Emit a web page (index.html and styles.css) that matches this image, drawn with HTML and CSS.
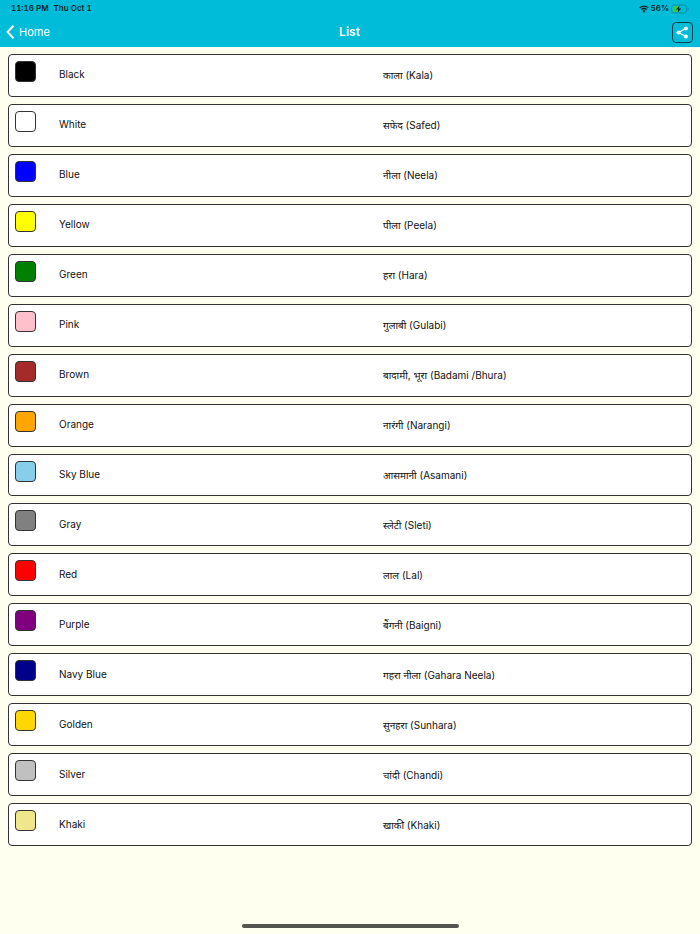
FILE: index.html
```html
<!DOCTYPE html>
<html lang="en">

<head>
  <meta charset="UTF-8">
  <meta name="viewport" content="width=device-width, initial-scale=1">
  <title>List</title>
  <link rel="stylesheet" href="styles.css">
</head>

<body>
  <div class="screen">
    <header class="header">
      <div class="status">
        <div class="status-time">
          <span>11:16 PM</span>
          <span>Thu Oct 1</span>
        </div>
        <div class="status-icons">
          <svg width="10" height="8" viewBox="0 0 20 15" aria-hidden="true">
            <path d="M1.5 5.2a12.2 12.2 0 0 1 17 0M4.6 8.7a7.6 7.6 0 0 1 10.8 0" fill="none" stroke="#06262c" stroke-width="2.8"/>
            <path d="M10 14.8l-3.4-3.6a4.8 4.8 0 0 1 6.8 0z" fill="#06262c"/>
          </svg>
          <span>56%</span>
          <svg width="18" height="10" viewBox="0 0 18 10" aria-hidden="true">
            <rect x="0.5" y="1" width="15" height="8" rx="2.5" fill="none" stroke="#078fa2"/>
            <path d="M3 2h5v6H3a1.5 1.5 0 0 1-1.5-1.5v-3A1.5 1.5 0 0 1 3 2z" fill="#35c759"/>
            <path d="M16.6 3.5v3q1-.4 1-1.5t-1-1.5z" fill="#078fa2"/>
            <path d="M8.6 1.8L5 5.6h2.3L6.6 8.4 10.3 4.6H8z" fill="#06262c"/>
          </svg>
        </div>
      </div>
      <nav class="navbar">
        <a class="back" href="#">
          <svg width="9" height="14" viewBox="0 0 9 14" aria-hidden="true">
            <path d="M7.5 0.8L1.5 7l6 6.2" fill="none" stroke="#fff" stroke-width="2"/>
          </svg>
          Home
        </a>
        <h1 class="title">List</h1>
        <button class="share" type="button" aria-label="Share">
          <svg width="13" height="13" viewBox="0 0 13 13" aria-hidden="true">
            <path d="M9.8 2.5L2.5 6.5l7.3 4" fill="none" stroke="#fff" stroke-width="1.2"/>
            <circle cx="9.8" cy="2.5" r="2.1" fill="#fff"/>
            <circle cx="2.5" cy="6.5" r="2.1" fill="#fff"/>
            <circle cx="9.8" cy="10.5" r="2.1" fill="#fff"/>
          </svg>
        </button>
      </nav>
    </header>

    <ul class="list">
      <li class="row">
        <span class="swatch black"></span>
        <span>Black</span>
        <span class="hindi">काला (Kala)</span>
      </li>
      <li class="row">
        <span class="swatch white"></span>
        <span>White</span>
        <span class="hindi">सफेद (Safed)</span>
      </li>
      <li class="row">
        <span class="swatch blue"></span>
        <span>Blue</span>
        <span class="hindi">नीला (Neela)</span>
      </li>
      <li class="row">
        <span class="swatch yellow"></span>
        <span>Yellow</span>
        <span class="hindi">पीला (Peela)</span>
      </li>
      <li class="row">
        <span class="swatch green"></span>
        <span>Green</span>
        <span class="hindi">हरा (Hara)</span>
      </li>
      <li class="row">
        <span class="swatch pink"></span>
        <span>Pink</span>
        <span class="hindi">गुलाबी (Gulabi)</span>
      </li>
      <li class="row">
        <span class="swatch brown"></span>
        <span>Brown</span>
        <span class="hindi">बादामी, भूरा (Badami /Bhura)</span>
      </li>
      <li class="row">
        <span class="swatch orange"></span>
        <span>Orange</span>
        <span class="hindi">नारंगी (Narangi)</span>
      </li>
      <li class="row">
        <span class="swatch sky-blue"></span>
        <span>Sky Blue</span>
        <span class="hindi">आसमानी (Asamani)</span>
      </li>
      <li class="row">
        <span class="swatch gray"></span>
        <span>Gray</span>
        <span class="hindi">स्लेटी (Sleti)</span>
      </li>
      <li class="row">
        <span class="swatch red"></span>
        <span>Red</span>
        <span class="hindi">लाल (Lal)</span>
      </li>
      <li class="row">
        <span class="swatch purple"></span>
        <span>Purple</span>
        <span class="hindi">बैंगनी (Baigni)</span>
      </li>
      <li class="row">
        <span class="swatch navy-blue"></span>
        <span>Navy Blue</span>
        <span class="hindi">गहरा नीला (Gahara Neela)</span>
      </li>
      <li class="row">
        <span class="swatch golden"></span>
        <span>Golden</span>
        <span class="hindi">सुनहरा (Sunhara)</span>
      </li>
      <li class="row">
        <span class="swatch silver"></span>
        <span>Silver</span>
        <span class="hindi">चांदी (Chandi)</span>
      </li>
      <li class="row">
        <span class="swatch khaki"></span>
        <span>Khaki</span>
        <span class="hindi">खाकी (Khaki)</span>
      </li>
    </ul>

    <footer class="footer">
      <div class="home-bar"></div>
    </footer>
  </div>
</body>

</html>
```
FILE: styles.css
```css
* {
  box-sizing: border-box;
}

body {
  margin: 0;
  font-family: Inter, "Noto Sans", "Noto Sans Devanagari", sans-serif;
  font-size: 10px;
  line-height: 16px;
  color: #111;
}

.screen {
  display: flex;
  flex-direction: column;
  min-height: 100vh;
  background-color: #fffff0;
}

.header {
  background-color: #00bcd8;
}

/* status bar */
.status {
  display: flex;
  justify-content: space-between;
  padding: 0 11px;
  height: 17px;
  font-size: 8px;
  font-weight: 600;
  font-variant-numeric: tabular-nums;
  line-height: 17px;
  color: #06262c;
}

.status-time {
  display: flex;
  gap: 5px;
}

.status-icons {
  display: flex;
  align-items: center;
  gap: 2px;
}

/* nav bar */
.navbar {
  display: grid;
  grid-template-columns: 1fr auto 1fr;
  align-items: center;
  height: 30px;
  padding: 0 7px 0 6px;
}

.back {
  display: flex;
  align-items: center;
  justify-self: start;
  gap: 4px;
  font-size: 11px;
  color: #fff;
  text-decoration: none;
}

.title {
  margin: 0;
  font-size: 12px;
  font-weight: 600;
  color: #fff;
}

.share {
  display: flex;
  align-items: center;
  justify-content: center;
  justify-self: end;
  width: 21px;
  height: 21px;
  padding: 0;
  border: 1px solid #04414b;
  border-radius: 4px;
  background: none;
}

/* colour list, rows share the free height */
.list {
  display: flex;
  flex: 1;
  flex-direction: column;
  gap: 7px;
  margin: 0;
  padding: 7px 8px 0;
  list-style: none;
}

.row {
  display: grid;
  flex: 1 0 36px;
  grid-template-columns: 28px 1fr 1fr;
  align-items: center;
  column-gap: 16px;
  padding: 0 0 2px 6px;
  border: 1px solid #333;
  border-radius: 4px;
  background-color: #fff;
}

.hindi {
  padding-top: 2px;
}

.swatch {
  align-self: start;
  width: 21px;
  height: 21px;
  margin-top: 6px;
  border: 1px solid #333;
  border-radius: 4px;
}

.black { background-color: #000; }
.white { background-color: #fff; }
.blue { background-color: #00f; }
.yellow { background-color: #ff0; }
.green { background-color: #008000; }
.pink { background-color: #ffc0cb; }
.brown { background-color: #a52a2a; }
.orange { background-color: #ffa500; }
.sky-blue { background-color: #87ceeb; }
.gray { background-color: #808080; }
.red { background-color: #f00; }
.purple { background-color: #800080; }
.navy-blue { background-color: #00008b; }
.golden { background-color: #ffd700; }
.silver { background-color: #c0c0c0; }
.khaki { background-color: #f0e68c; }

/* home indicator */
.footer {
  display: flex;
  align-items: flex-end;
  justify-content: center;
  height: 88px;
  padding-bottom: 6px;
}

.home-bar {
  width: 31%;
  height: 4px;
  border-radius: 2px;
  background-color: #555550;
}
```
